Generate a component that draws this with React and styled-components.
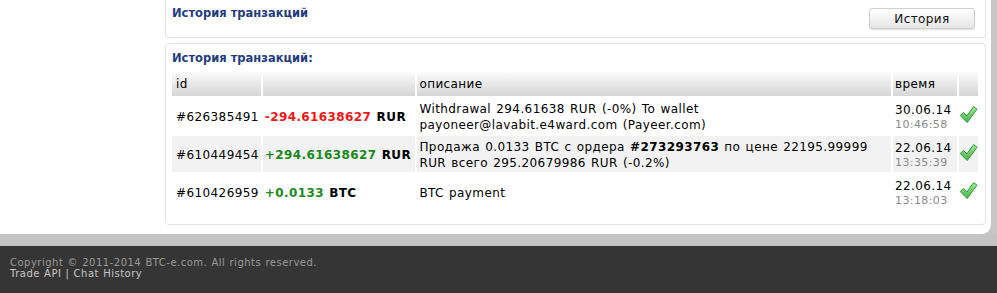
import React from "react";
import styled, { createGlobalStyle } from "styled-components";

const GlobalStyle = createGlobalStyle`
  body {
    margin: 0;
    background: #c6c6c6;
    font-family: "DejaVu Sans", Verdana, sans-serif;
    font-size: 12px;
    color: #000;
  }
`;

const Page = styled.div`
  width: 991px;
  background: #fff;
  border-radius: 0 0 9px 0;
  display: grid;
  grid-template-columns: 165px 821px;
  padding-bottom: 9px;
`;

const Sidebar = styled.div``;

const Content = styled.div`
  display: flex;
  flex-direction: column;
  gap: 5px;
`;

const Panel = styled.div`
  border: 1px solid #e3e3e3;
  border-radius: 4px;
  padding: 6px 6px 12px 6px;
  ${(p) => p.$cut && `
    border-top: none;
    border-radius: 0 0 4px 4px;
    padding-top: 5px;
    padding-bottom: 8px;
  `}
`;

const PanelHead = styled.div`
  display: flex;
  justify-content: space-between;
  align-items: flex-start;
`;

const Title = styled.div`
  font-weight: bold;
  color: #1f3c82;
  font-size: 11.5px;
  line-height: 16px;
  margin-bottom: 6px;
`;

const Button = styled.button`
  width: 106px;
  height: 21px;
  margin: 3px 4px 0 0;
  font-family: inherit;
  font-size: 12px;
  letter-spacing: 0.4px;
  color: #111;
  border: 1px solid #cfcfcf;
  border-radius: 3px;
  background: linear-gradient(#ffffff, #e6e6e6);
  box-shadow: 0 1px 1px rgba(0, 0, 0, 0.12);
`;

const Table = styled.table`
  border-collapse: separate;
  border-spacing: 2px;
  margin: -2px -2px 0 -2px;
  width: 810px;
  letter-spacing: 0.4px;
  word-spacing: 1px;
`;

const Th = styled.th`
  text-align: left;
  font-weight: normal;
  height: 24px;
  padding: 0 2px 0 ${(p) => (p.$first ? 4 : 2)}px;
  background: linear-gradient(#fbfbfb, #d6d6d6);
  width: ${(p) => p.$w}px;
`;

const Td = styled.td`
  padding: 3px 2px 1px ${(p) => (p.$first ? 4 : 2)}px;
  height: 32px;
  vertical-align: middle;
  line-height: 16px;
  background: ${(p) => (p.$alt ? "#f2f2f2" : "#fff")};
  ${(p) => p.$icon && "padding: 0; text-align: center;"}
`;

const Amount = styled.span`
  font-weight: bold;
  color: ${(p) => (p.$neg ? "#f41616" : "#1a8a1a")};
`;

const Cur = styled.b`
  color: #000;
`;

const Date = styled.div`
  line-height: 16px;
`;

const Time = styled.div`
  font-size: 11px;
  color: #8a8a8a;
  line-height: 14px;
`;

const Footer = styled.footer`
  border-top: 12px solid #c4c4c4;
  background: #353535;
  padding: 11px 10px 20px;
  font-size: 10px;
  line-height: 11px;
  letter-spacing: 0.5px;
  word-spacing: 0.5px;
`;

const Copy = styled.div`
  color: #9a9a9a;
`;

const Links = styled.div`
  color: #c8c8c8;
`;

const Check = () => (
  <svg width="19" height="19" viewBox="0 0 19 19">
    <defs>
      <linearGradient id="cg" x1="0" y1="0" x2="0" y2="1">
        <stop offset="0" stopColor="#a4ea98" />
        <stop offset="1" stopColor="#42b449" />
      </linearGradient>
    </defs>
    <path
      d="M1.2 10.5 L4.6 7.4 L7.8 11 L14.6 1.6 L18 4.2 L8.2 17.6 Z"
      fill="url(#cg)"
      stroke="#2f9a36"
      strokeWidth="1"
      strokeLinejoin="round"
    />
  </svg>
);

const rows = [
  {
    id: "#626385491",
    amount: "-294.61638627",
    cur: "RUR",
    neg: true,
    desc: <>Withdrawal 294.61638 RUR (-0%) To wallet<br />payoneer@lavabit.e4ward.com (Payeer.com)</>,
    date: "30.06.14",
    time: "10:46:58",
  },
  {
    id: "#610449454",
    amount: "+294.61638627",
    cur: "RUR",
    desc: <>Продажа 0.0133 BTC с ордера <b>#273293763</b> по цене 22195.99999<br />RUR всего 295.20679986 RUR (-0.2%)</>,
    date: "22.06.14",
    time: "13:35:39",
  },
  {
    id: "#610426959",
    amount: "+0.0133",
    cur: "BTC",
    desc: "BTC payment",
    date: "22.06.14",
    time: "13:18:03",
  },
];

export default function App() {
  return (
    <>
      <GlobalStyle />
      <Page>
        <Sidebar />
        <Content>
          <Panel $cut>
            <PanelHead>
              <Title>История транзакций</Title>
              <Button>История</Button>
            </PanelHead>
          </Panel>
          <Panel>
            <Title>История транзакций:</Title>
            <Table>
              <thead>
                <tr>
                  <Th $first $w={82}>id</Th>
                  <Th $w={149}></Th>
                  <Th $w={472}>описание</Th>
                  <Th $w={60}>время</Th>
                  <Th></Th>
                </tr>
              </thead>
              <tbody>
                {rows.map((r, i) => (
                  <tr key={r.id}>
                    <Td $first $alt={i === 1}>{r.id}</Td>
                    <Td $alt={i === 1}>
                      <Amount $neg={r.neg}>{r.amount}</Amount> <Cur>{r.cur}</Cur>
                    </Td>
                    <Td $alt={i === 1}>{r.desc}</Td>
                    <Td $alt={i === 1}>
                      <Date>{r.date}</Date>
                      <Time>{r.time}</Time>
                    </Td>
                    <Td $alt={i === 1} $icon>
                      <Check />
                    </Td>
                  </tr>
                ))}
              </tbody>
            </Table>
          </Panel>
        </Content>
      </Page>
      <Footer>
        <Copy>Copyright © 2011-2014 BTC-e.com. All rights reserved.</Copy>
        <Links>Trade API | Chat History</Links>
      </Footer>
    </>
  );
}
